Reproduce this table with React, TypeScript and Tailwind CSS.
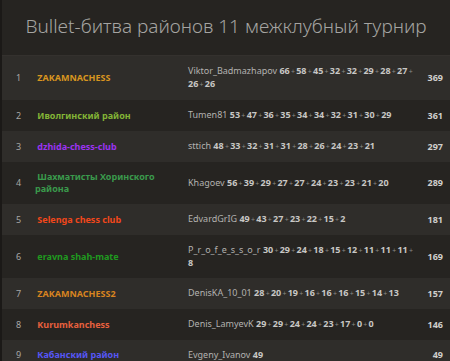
const rows = [
  { rank: 1, team: "ZAKAMNACHESS", color: "text-[#d8951f]", player: "Viktor_Badmazhapov", scores: [66, 58, 45, 32, 32, 29, 28, 27, 26, 26], total: 369 },
  { rank: 2, team: "Иволгинский район", color: "text-[#83b536]", player: "Tumen81", scores: [53, 47, 36, 35, 34, 34, 32, 31, 30, 29], total: 361 },
  { rank: 3, team: "dzhida-chess-club", color: "text-[#9a33f0]", player: "sttich", scores: [48, 33, 32, 31, 31, 28, 26, 24, 23, 21], total: 297 },
  { rank: 4, team: "Шахматисты Хоринского района", color: "text-[#3a9a4c]", player: "Khagoev", scores: [56, 39, 29, 27, 27, 24, 23, 23, 21, 20], total: 289 },
  { rank: 5, team: "Selenga chess club", color: "text-[#f2471b]", player: "EdvardGrIG", scores: [49, 43, 27, 23, 22, 15, 2], total: 181 },
  { rank: 6, team: "eravna shah-mate", color: "text-[#1f9a1f]", player: "P_r_o_f_e_s_s_o_r", scores: [30, 29, 24, 18, 15, 12, 11, 11, 11, 8], total: 169 },
  { rank: 7, team: "ZAKAMNACHESS2", color: "text-[#d88420]", player: "DenisKA_10_01", scores: [28, 20, 19, 16, 16, 16, 15, 14, 13], total: 157 },
  { rank: 8, team: "Kurumkanchess", color: "text-[#e6603e]", player: "Denis_LamyevK", scores: [29, 29, 24, 24, 23, 17, 0, 0], total: 146 },
  { rank: 9, team: "Кабанский район", color: "text-[#5656f5]", player: "Evgeny_Ivanov", scores: [49], total: 49 },
];

export default function App() {
  return (
    <div className="min-h-[361px] bg-[#1b1917] pl-[2px] font-['Noto_Sans',sans-serif]">
      <div className="bg-[#262421] min-h-[361px]">
        <h1 className="h-[56px] pb-[2px] flex items-center justify-center text-[19px] font-light text-[#a5a4a2] border-b border-[#34312e]">
          Bullet-битва районов 11 межклубный турнир
        </h1>
        <div>
          {rows.map((r) => (
            <div
              key={r.rank}
              className={`grid grid-cols-[33px_153px_1fr_30px] items-center py-[9px] text-[9px] leading-[12px] ${
                r.rank % 2 === 1 ? "bg-[#2f2d2a]" : "bg-[#262421]"
              }`}
            >
              <div className="text-center text-[#a8a7a5]">{r.rank}</div>
              <div className={`font-bold ${r.color} pr-2`}>&nbsp;{r.team}</div>
              <div className="text-[#b3b2b0] pr-[3px]">
                {r.player}{" "}
                {r.scores.map((s, i) => (
                  <span key={i}>
                    {i > 0 && (
                      <>
                        <span className="text-[7px] text-[#8a8987] mx-[1.25px]">+</span>
                        <wbr />
                      </>
                    )}
                    <span className="font-bold text-[#c8c7c5]">{s}</span>
                  </span>
                ))}
              </div>
              <div className="text-right pr-[7px] font-bold text-[#d0cfcd]">{r.total}</div>
            </div>
          ))}
        </div>
      </div>
    </div>
  );
}
